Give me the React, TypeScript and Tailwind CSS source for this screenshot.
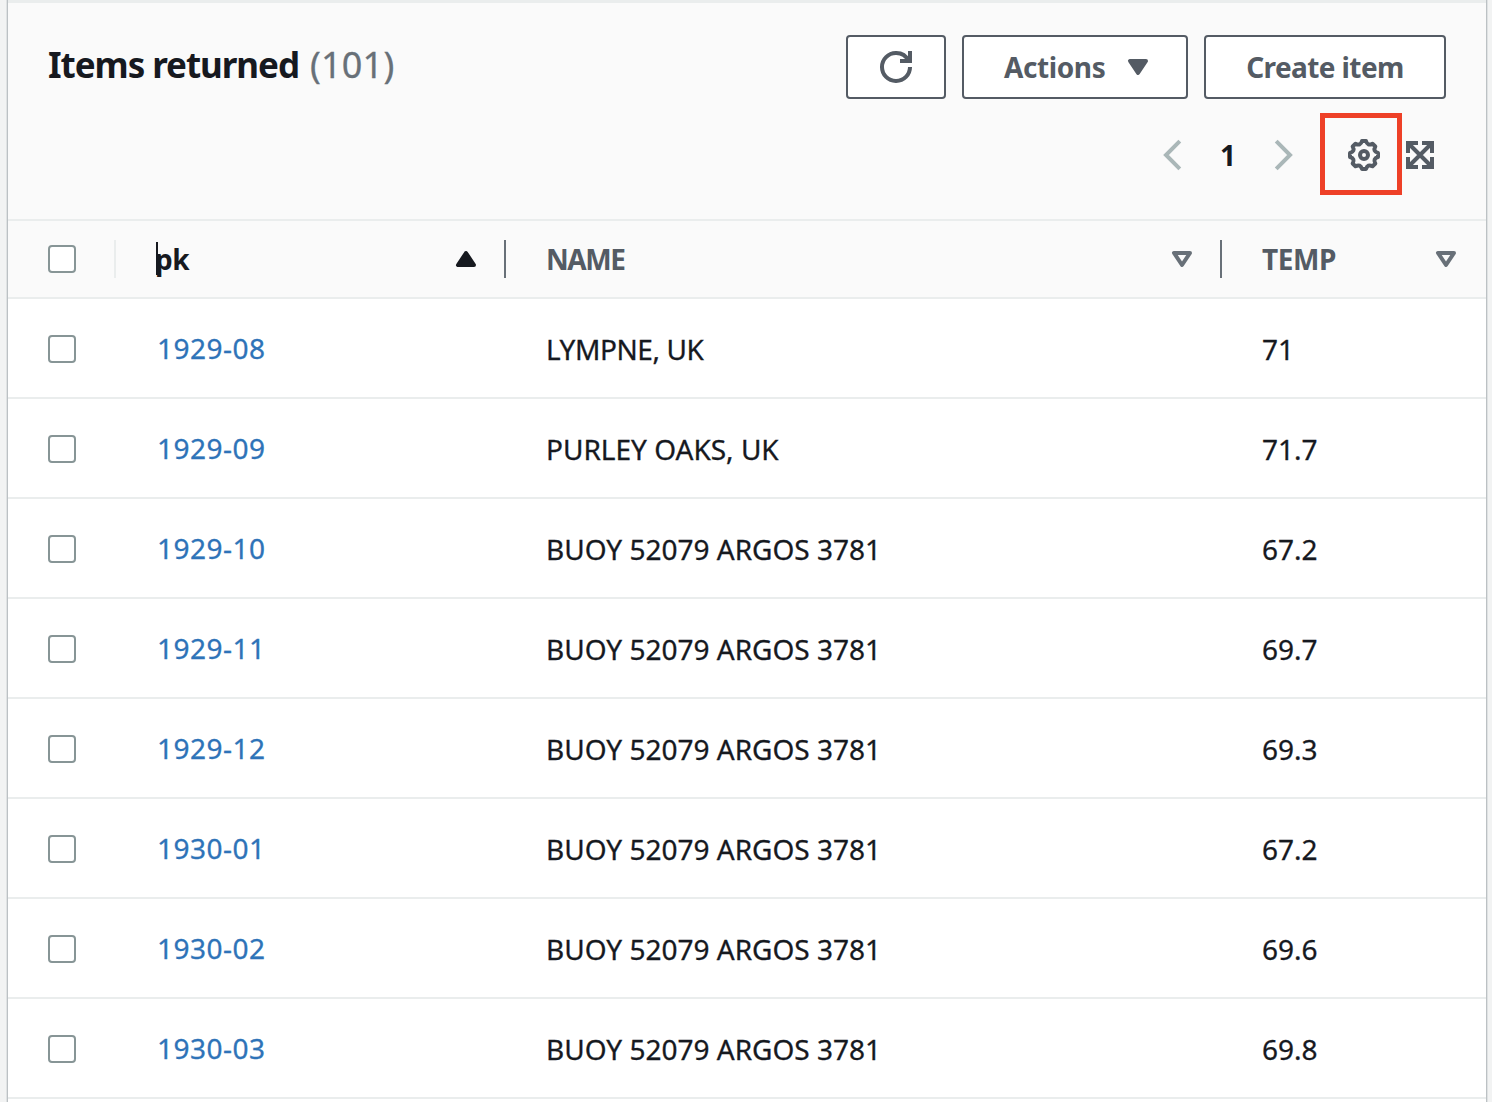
import React from "react";

const rows = [
  { pk: "1929-08", name: "LYMPNE, UK", temp: "71", tracking: "tracking-[-0.4px]" },
  { pk: "1929-09", name: "PURLEY OAKS, UK", temp: "71.7", tracking: "tracking-normal" },
  { pk: "1929-10", name: "BUOY 52079 ARGOS 3781", temp: "67.2", tracking: "tracking-normal" },
  { pk: "1929-11", name: "BUOY 52079 ARGOS 3781", temp: "69.7", tracking: "tracking-normal" },
  { pk: "1929-12", name: "BUOY 52079 ARGOS 3781", temp: "69.3", tracking: "tracking-normal" },
  { pk: "1930-01", name: "BUOY 52079 ARGOS 3781", temp: "67.2", tracking: "tracking-normal" },
  { pk: "1930-02", name: "BUOY 52079 ARGOS 3781", temp: "69.6", tracking: "tracking-normal" },
  { pk: "1930-03", name: "BUOY 52079 ARGOS 3781", temp: "69.8", tracking: "tracking-normal" },
];

const COLUMNS = "grid grid-cols-[108px_390px_716px_264px]";

function Icon({ children, className = "" }: { children: React.ReactNode; className?: string }) {
  return (
    <svg viewBox="0 0 16 16" fill="none" stroke="currentColor" strokeWidth="2" className={`size-8 shrink-0 ${className}`}>
      {children}
    </svg>
  );
}

function Caret({ up = false, filled = false, className = "" }: { up?: boolean; filled?: boolean; className?: string }) {
  return (
    <Icon className={className}>
      <path d={up ? "M4 11h8L8 5l-4 6z" : "M4 5h8l-4 6-4-6z"} strokeLinejoin="round" fill={filled ? "currentColor" : "none"} />
    </Icon>
  );
}

function Checkbox() {
  return <span className="block size-7 rounded-[4px] border-2 border-[#879596] bg-white" />;
}

function Button({ className, children }: { className: string; children: React.ReactNode }) {
  return (
    <button className={`flex h-16 items-center rounded-[4px] border-2 border-[#545b64] bg-white text-[28px] font-bold text-[#545b64] ${className}`}>
      {children}
    </button>
  );
}

export default function App() {
  return (
    <div className="h-[1102px] w-[1492px] overflow-hidden bg-[#f2f3f3] pl-2 font-['Noto_Sans',sans-serif] text-[28px] leading-9 text-[#16191f]">
      <main className="h-full w-[1478px] bg-white shadow-[-1px_0_0_#bcc1c4,1px_0_0_#bcc1c4,-2px_0_0_#dfe2e3,2px_0_0_#dfe2e3]">
        <header className="h-[221px] border-t-[3px] border-b-2 border-t-[#eaeded] border-b-[#eaeded] bg-[#fafafa] pr-10 pl-10">
          <div className="flex items-start justify-between pt-8">
            <h1 className="flex gap-[11px] pt-[6px] leading-[48px]">
              <span className="text-[35px] font-bold tracking-[-1.05px]">Items returned</span>
              <span className="text-[36px] tracking-[0.2px] text-[#687078] [-webkit-text-stroke:0.3px]">(101)</span>
            </h1>
            <div className="flex gap-4">
              <Button className="w-[100px] justify-center">
                <Icon>
                  <path d="M10 5h5V0" />
                  <path d="M15 8a6.957 6.957 0 0 1-7 7 6.957 6.957 0 0 1-7-7 6.957 6.957 0 0 1 7-7 6.87 6.87 0 0 1 6.3 4" />
                </Icon>
              </Button>
              <Button className="w-[226px] justify-between pr-8 pl-10">
                <span className="tracking-[-0.4px]">Actions</span>
                <Caret filled />
              </Button>
              <Button className="w-[242px] justify-center">
                <span className="tracking-[-0.6px]">Create item</span>
              </Button>
            </div>
          </div>
          <div className="mt-10 flex items-center justify-end pr-[10px] text-[#545b64]">
            <Icon className="text-[#aab7b8]">
              <path d="M11.9 1.1 5 8l6.9 6.9" />
            </Icon>
            <span className="w-20 text-center leading-8 font-bold text-[#16191f]">1</span>
            <Icon className="text-[#aab7b8]">
              <path d="M4.1 1.1 11 8l-6.9 6.9" />
            </Icon>
            <span className="relative ml-12 block size-8">
              <Icon>
                <circle cx="8" cy="8" r="2" />
                <path
                  strokeLinejoin="round"
                  d="M7 1H9Q9.8 3.7 12.24 2.34L13.66 3.76Q12.3 6.2 15 7V9Q12.3 9.8 13.66 12.24L12.24 13.66Q9.8 12.3 9 15H7Q6.2 12.3 3.76 13.66L2.34 12.24Q3.7 9.8 1 9V7Q3.7 6.2 2.34 3.76L3.76 2.34Q6.2 3.7 7 1z"
                />
              </Icon>
              <span className="absolute -top-[26px] -left-7 h-[82px] w-[82px] border-[5px] border-[#ee4027]" />
            </span>
            <Icon className="ml-6">
              <path d="M2 7V2h5M9 2h5v5M14 9v5H9M7 14H2V9M2.5 2.5l11 11M13.5 2.5l-11 11" />
            </Icon>
          </div>
        </header>

        <div className={`${COLUMNS} h-[78px] items-center border-b-2 border-[#eaeded] bg-[#fafafa] font-bold text-[#545b64]`}>
          <div className="flex h-[38px] items-center border-r-2 border-[#eaeded] pl-10">
            <Checkbox />
          </div>
          <div className="relative flex h-[38px] items-center justify-between border-r-2 border-[#687078] pr-[22px] pl-[39px] text-[#16191f]">
            <span className="tracking-[-0.4px]">pk</span>
            <span className="absolute top-[2px] left-10 h-[33px] w-[2px] bg-[#16191f]" />
            <Caret up filled />
          </div>
          <div className="flex h-[38px] items-center justify-between border-r-2 border-[#687078] pr-[22px] pl-10">
            <span className="tracking-[-1.4px]">NAME</span>
            <Caret className="text-[#687078]" />
          </div>
          <div className="flex h-[38px] items-center justify-between pr-6 pl-10">
            <span className="tracking-[-0.4px]">TEMP</span>
            <Caret className="text-[#687078]" />
          </div>
        </div>

        {rows.map((row) => (
          <div key={row.pk} className={`${COLUMNS} h-[100px] items-center border-b-2 border-[#eaeded] [-webkit-text-stroke:0.3px]`}>
            <div className="pt-[2px] pl-10">
              <Checkbox />
            </div>
            <a className="pl-[41px] tracking-[0.5px] text-[#2e73b8]">{row.pk}</a>
            <span className={`pt-[2px] pl-10 ${row.tracking}`}>{row.name}</span>
            <span className="pt-[2px] pl-10">{row.temp}</span>
          </div>
        ))}
      </main>
    </div>
  );
}
